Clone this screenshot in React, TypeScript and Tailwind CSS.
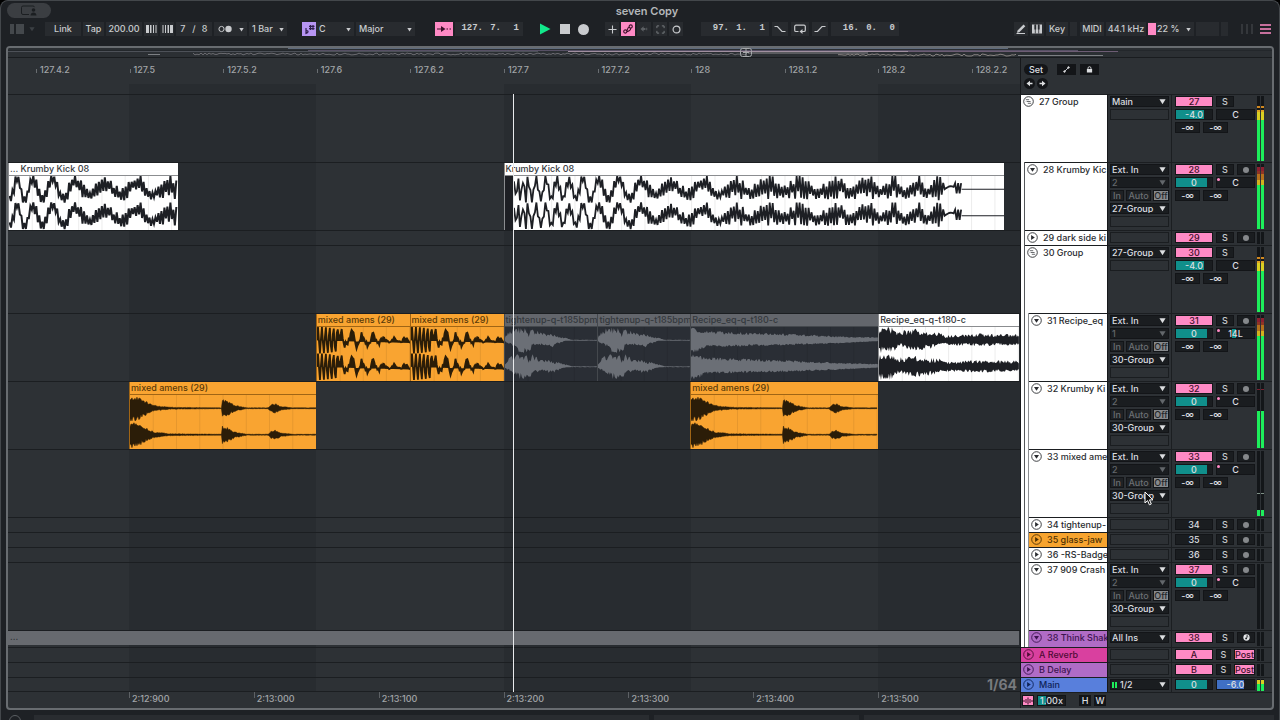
import type { ReactNode } from 'react';
import { clsx } from 'clsx';

type Point = [number, number];
type Wave = 'kick' | 'kickTail' | 'hits' | 'break' | 'tighten' | 'recipe' | 'recipeLoud' | 'none';
type Tone = 'white' | 'orange' | 'muted' | 'ghost';

interface Clip {
  name: string;
  start: number;
  end: number;
  tone: Tone;
  wave: Wave;
}

interface MeterPart {
  size: number;
  color: string;
}

interface Track {
  id: string;
  name: string;
  height: string;
  depth: number;
  icon: 'group' | 'open' | 'closed';
  color: string;
  input?: string;
  channel?: string;
  output?: string;
  active: boolean;
  volume?: string;
  pan?: string;
  arm?: 'audio' | 'midi';
  meter: MeterPart[];
  clips: Clip[];
}

// Width of the visible part of the timeline, in timeline units
const VIEW = 1013;
const pct = (units: number) => `${(units / VIEW) * 100}%`;

const IDLE: MeterPart[] = [];
const LOUD: MeterPart[] = [
  { size: 6, color: 'bg-[#8c1f31]' },
  { size: 6, color: 'bg-[#8f3524]' },
  { size: 8, color: 'bg-[#b5701d]' },
  { size: 8, color: 'bg-[#d3b01e]' },
  { size: 68, color: 'bg-[#1dee5b]' },
];
const GROUPED: MeterPart[] = [
  { size: 3, color: 'bg-[#d0871f]' },
  { size: 2, color: 'bg-[#131619]' },
  { size: 4, color: 'bg-[#dfa221]' },
  { size: 12, color: 'bg-[#d9cf22]' },
  { size: 63, color: 'bg-[#1dee5b]' },
];

const TRACKS: Track[] = [
  {
    id: '27', name: '27 Group', height: 'h-[68px]', depth: 0, icon: 'group', color: 'bg-white text-[#2a2c30]',
    input: 'Main', active: true, volume: '-4.0', pan: 'C', meter: GROUPED, clips: [],
  },
  {
    id: '28', name: '28 Krumby Kic', height: 'h-[68px]', depth: 1, icon: 'open', color: 'bg-white text-[#2a2c30]',
    input: 'Ext. In', channel: '2', output: '27-Group', active: true, volume: '0', pan: 'C', arm: 'audio', meter: LOUD,
    clips: [
      { name: '... Krumby Kick 08', start: 0, end: 170, tone: 'white', wave: 'kickTail' },
      { name: 'Krumby Kick 08', start: 496, end: 997, tone: 'white', wave: 'kick' },
    ],
  },
  {
    id: '29', name: '29 dark side ki', height: 'h-[15px]', depth: 1, icon: 'closed', color: 'bg-white text-[#2a2c30]',
    active: true, arm: 'audio', meter: IDLE, clips: [],
  },
  {
    id: '30', name: '30 Group', height: 'h-[68px]', depth: 1, icon: 'group', color: 'bg-white text-[#2a2c30]',
    input: '27-Group', active: true, volume: '-4.0', pan: 'C', meter: GROUPED, clips: [],
  },
  {
    id: '31', name: '31 Recipe_eq', height: 'h-[68px]', depth: 2, icon: 'open', color: 'bg-white text-[#2a2c30]',
    input: 'Ext. In', channel: '1', output: '30-Group', active: true, volume: '0', pan: '14L', arm: 'audio', meter: LOUD,
    clips: [
      { name: 'mixed amens (29)', start: 308, end: 402, tone: 'orange', wave: 'break' },
      { name: 'mixed amens (29)', start: 402, end: 496, tone: 'orange', wave: 'break' },
      { name: 'tightenup-q-t185bpm', start: 496, end: 590, tone: 'muted', wave: 'tighten' },
      { name: 'tightenup-q-t185bpm', start: 590, end: 683, tone: 'muted', wave: 'tighten' },
      { name: 'Recipe_eq-q-t180-c', start: 683, end: 871, tone: 'muted', wave: 'recipe' },
      { name: 'Recipe_eq-q-t180-c', start: 871, end: 1012, tone: 'white', wave: 'recipeLoud' },
    ],
  },
  {
    id: '32', name: '32 Krumby Ki', height: 'h-[68px]', depth: 2, icon: 'open', color: 'bg-white text-[#2a2c30]',
    input: 'Ext. In', channel: '2', output: '30-Group', active: true, volume: '0', pan: 'C', arm: 'audio',
    meter: [
      { size: 2, color: 'bg-[#7a1f30]' },
      { size: 32, color: 'bg-[#131619]' },
      { size: 57, color: 'bg-[#1dee5b]' },
    ],
    clips: [
      { name: 'mixed amens (29)', start: 121, end: 308, tone: 'orange', wave: 'hits' },
      { name: 'mixed amens (29)', start: 683, end: 871, tone: 'orange', wave: 'hits' },
    ],
  },
  {
    id: '33', name: '33 mixed ame', height: 'h-[68px]', depth: 2, icon: 'open', color: 'bg-white text-[#2a2c30]',
    input: 'Ext. In', channel: '2', output: '30-Group', active: true, volume: '0', pan: 'C', arm: 'audio',
    meter: [
      { size: 2, color: 'bg-[#7f9087]' },
      { size: 24, color: 'bg-[#131619]' },
      { size: 10, color: 'bg-[#1dee5b]' },
    ],
    clips: [],
  },
  {
    id: '34', name: '34 tightenup-', height: 'h-[15px]', depth: 2, icon: 'closed', color: 'bg-white text-[#2a2c30]',
    active: false, arm: 'audio', meter: IDLE, clips: [],
  },
  {
    id: '35', name: '35 glass-jaw', height: 'h-[15px]', depth: 2, icon: 'closed', color: 'bg-[#f7a42f] text-[#4d3104]',
    active: false, arm: 'audio', meter: IDLE, clips: [],
  },
  {
    id: '36', name: '36 -RS-Badge', height: 'h-[15px]', depth: 2, icon: 'closed', color: 'bg-white text-[#2a2c30]',
    active: false, arm: 'audio', meter: IDLE, clips: [],
  },
  {
    id: '37', name: '37 909 Crash', height: 'h-[68px]', depth: 2, icon: 'open', color: 'bg-white text-[#2a2c30]',
    input: 'Ext. In', channel: '2', output: '30-Group', active: true, volume: '0', pan: 'C', arm: 'audio', meter: IDLE, clips: [],
  },
  {
    id: '38', name: '38 Think Shak', height: 'h-[17px]', depth: 2, icon: 'open', color: 'bg-[#b06cc6] text-[#3d1450]',
    input: 'All Ins', active: true, arm: 'midi', meter: IDLE,
    clips: [{ name: '...', start: 0, end: 1012, tone: 'ghost', wave: 'none' }],
  },
];

const RETURNS = [
  { id: 'A', name: 'A Reverb', color: 'bg-[#d9409f] text-[#4f0c36]' },
  { id: 'B', name: 'B Delay', color: 'bg-[#b06cc6] text-[#3d1450]' },
];

const BEATS = ['127.4.2', '127.5', '127.5.2', '127.6', '127.6.2', '127.7', '127.7.2', '128', '128.1.2', '128.2', '128.2.2'];
const TIMES = ['2:12:900', '2:13:000', '2:13:100', '2:13:200', '2:13:300', '2:13:400', '2:13:500'];

/* ---------- waveforms ---------- */

const random = (seed: number) => {
  let s = seed;
  return () => {
    s = (s * 16807) % 2147483647;
    return s / 2147483647;
  };
};

const lerp = (points: Point[], x: number) => {
  const i = points.findIndex((p) => p[0] >= x);
  if (i === -1) return points[points.length - 1][1];
  if (i === 0) return points[0][1];
  const [x0, y0] = points[i - 1];
  const [x1, y1] = points[i];
  return y0 + ((y1 - y0) * (x - x0)) / (x1 - x0);
};

// Filled shape: top and bottom reach are given as envelopes round the centre
const envelope = (width: number, center: number, top: Point[], bottom: Point[], rough: number, seed: number) => {
  const r = random(seed * 7919);
  const up: string[] = [];
  const down: string[] = [];
  for (let x = 0; x <= width; x += 1) {
    up.push(`${x} ${(center - lerp(top, x) * (1 - rough * r())).toFixed(1)}`);
    down.unshift(`${x} ${(center + lerp(bottom, x) * (1 - rough * r())).toFixed(1)}`);
  }
  return `M${up.join('L')}L${down.join('L')}Z`;
};

const KICK_PEAKS = [9, 13, 18, 23, 31, 41, 52, 64, 78, 94, 114, 136, 166, 199, 230, 263, 296, 333, 363, 391, 412, 437];
const KICK_SLOW: Point[] = [[0, 10], [120, 10], [150, 6], [200, 6], [240, 3], [430, 3], [441, 0]];
const KICK_FAST: Point[] = [[0, 6], [60, 6], [120, 7], [200, 8], [230, 13], [437, 13], [444, 3], [450, 1], [458, 0]];

const kick = (from: number, to: number, center: number) => {
  const r = random(421177);
  const out: string[] = [];
  for (let i = 0; i * 1.5 < to; i += 1) {
    const x = i * 1.5;
    const jitter = r();
    if (x < from) continue;
    let y = 0;
    if (x < 441) {
      const n = KICK_PEAKS.findIndex((p) => p > x);
      const a = n > 0 ? KICK_PEAKS[n - 1] : n === 0 ? 5 : 437;
      const b = n >= 0 ? KICK_PEAKS[n] : 460;
      const swell = Math.cos((2 * Math.PI * (x - a)) / (b - a));
      y = swell * lerp(KICK_SLOW, x) + (i % 2 ? 1 : -1) * (0.3 + 0.7 * jitter) * lerp(KICK_FAST, x) * (x > 210 ? 0.75 + 0.25 * swell : 1);
    } else if (x < 458) {
      y = x < 451 ? 3 * Math.sin((x - 441) / 4) : i % 2 ? 6 : -4;
    }
    out.push(`${(x - from).toFixed(1)} ${(center - Math.max(-13, Math.min(13, y))).toFixed(1)}`);
  }
  return `M${out.join('L')}`;
};

const breakLine = (center: number) => {
  const r = random(977311);
  const env: Point[] = [[0, 13], [36, 13], [48, 9], [60, 7], [66, 4], [94, 3]];
  const out: string[] = [];
  for (let x = 0; x <= 94; x += 1) {
    const fast = x < 22 ? Math.sin(x * 1.6) : Math.sin(x * 0.58) * 0.6 + (r() - 0.5) * 0.9;
    out.push(`${x} ${(center - fast * lerp(env, x)).toFixed(1)}`);
  }
  return `M${out.join('L')}`;
};

const HITS: Point[] = [
  [0, 13], [8, 12], [14, 8], [24, 3], [40, 1], [92, 0.5], [93, 9], [99, 7], [106, 3], [118, 0.5],
  [139, 0.5], [142, 4], [146, 5], [152, 2], [164, 0.5], [187, 0.5],
];
const TIGHTEN_TOP: Point[] = [[0, 4], [6, 12], [22, 13], [24, 4], [27, 13], [34, 9], [44, 7], [56, 4], [68, 0.5], [94, 0.5]];
const TIGHTEN_LOW: Point[] = [[0, 2], [8, 6], [14, 12], [24, 13], [28, 6], [38, 5], [48, 7], [60, 1], [68, 0.5], [94, 0.5]];
const RECIPE_TOP: Point[] = [[0, 13], [12, 10], [26, 9], [60, 8], [110, 6], [150, 4], [188, 3]];
const RECIPE_LOW: Point[] = [[0, 13], [8, 12], [14, 7], [60, 6], [100, 5], [150, 3], [188, 1]];
const LOUD_TOP: Point[] = [[0, 13], [14, 13], [20, 9], [36, 12], [44, 8], [60, 9], [66, 5], [100, 7], [141, 6]];
const LOUD_LOW: Point[] = [[0, 13], [14, 13], [20, 6], [36, 11], [60, 7], [66, 5], [100, 6], [141, 5]];

const CENTERS = [13, 39];

function Waveform({ wave, width }: { wave: Wave; width: number }) {
  return (
    <svg viewBox={`0 0 ${width} 53`} preserveAspectRatio="none" className="block h-full w-full" aria-hidden="true">
      {Array.from({ length: Math.floor(width / 23.4) }, (_, i) => (
        <line key={i} x1={(i + 1) * 23.4} x2={(i + 1) * 23.4} y1="0" y2="53" stroke="#000" strokeOpacity="0.08" strokeWidth="1" />
      ))}
      {wave === 'kick' && <rect x="0" y="0" width="9" height="53" fill="#1d1f24" />}
      {CENTERS.map((c, i) => {
        if (wave === 'kick') {
          return (
            <g key={c} fill="none" stroke="#1d1f24">
              <path d={kick(9, 458, c)} transform="translate(9 0)" strokeWidth="1.8" />
              <path d={`M458 ${c}H501`} strokeWidth="1" />
            </g>
          );
        }
        if (wave === 'kickTail') {
          return <path key={c} d={kick(70, 240, c)} fill="none" stroke="#1d1f24" strokeWidth="2" />;
        }
        if (wave === 'break') {
          return <path key={c} d={breakLine(c)} fill="#2b1d08" stroke="#2b1d08" strokeWidth="1.8" />;
        }
        if (wave === 'hits') {
          return <path key={c} d={envelope(187, c, HITS, HITS, 0.4, 31 + i)} fill="#2b1d08" stroke="#2b1d08" strokeWidth="0.5" />;
        }
        if (wave === 'tighten') {
          return <path key={c} d={envelope(94, c, TIGHTEN_TOP, TIGHTEN_LOW, 0.5, 77 + i)} fill="#6b6f76" />;
        }
        if (wave === 'recipe') {
          return <path key={c} d={envelope(188, c, RECIPE_TOP, RECIPE_LOW, 0.35, 55 + i)} fill="#6b6f76" />;
        }
        return <path key={c} d={envelope(141, c, LOUD_TOP, LOUD_LOW, 0.55, 15 + i)} fill="#1d1f24" />;
      })}
    </svg>
  );
}

/* ---------- small controls ---------- */

function Triangle({ className = 'size-[7px]' }: { className?: string }) {
  return (
    <svg viewBox="0 0 8 8" className={className} fill="currentColor" aria-hidden="true">
      <path d="M0.5 1.5h7L4 7z" />
    </svg>
  );
}

function Dropdown({ label, value, dim, lead }: { label: string; value: string; dim?: boolean; lead?: ReactNode }) {
  return (
    <div
      className={clsx(
        'flex h-[11px] items-center border border-[#131518] bg-[#1a1d20] pr-[2px] pl-px',
        dim ? 'text-[#63676b]' : 'text-[#dcdee0]'
      )}
    >
      {lead}
      <select aria-label={label} defaultValue={value} className="h-[9px] min-w-0 flex-1 appearance-none bg-transparent text-[9px] leading-[9px] outline-none">
        <option>{value}</option>
      </select>
      <Triangle />
    </div>
  );
}

function BarField({ label, value, fill, fillColor, className }: { label: string; value: string; fill?: string; fillColor?: string; className: string }) {
  return (
    <div className={clsx('relative h-[11px] border border-[#131518] bg-[#1a1d20]', className)}>
      {fill && <div className={clsx('absolute inset-y-0 left-0', fill, fillColor)} />}
      <input
        aria-label={label}
        defaultValue={value}
        className="relative block h-[9px] w-full bg-transparent text-center text-[9px] leading-[9px] text-[#dcdee0] outline-none"
      />
    </div>
  );
}

function SmallButton({ children, className, label }: { children: ReactNode; className: string; label?: string }) {
  return (
    <button aria-label={label} className={clsx('flex h-[11px] items-center justify-center border border-[#131518] text-[9px] leading-[9px]', className)}>
      {children}
    </button>
  );
}

function Meter({ parts }: { parts: MeterPart[] }) {
  return (
    <div className="flex h-full w-[7px] gap-px pb-px">
      {[0, 1].map((side) => (
        <div key={side} className="flex h-full w-[3px] flex-col justify-end bg-[#131619]">
          {parts.map((part, i) => (
            <div key={i} className={part.color} style={{ height: `${part.size}%` }} />
          ))}
        </div>
      ))}
    </div>
  );
}

function FoldIcon({ kind }: { kind: Track['icon'] }) {
  return (
    <svg viewBox="0 0 11 11" className="size-[11px] shrink-0" fill="none" stroke="currentColor" aria-hidden="true">
      <circle cx="5.5" cy="5.5" r="4.8" strokeWidth="0.9" />
      {kind === 'open' && <path d="M3 4h5L5.5 7.7z" fill="currentColor" stroke="none" />}
      {kind === 'closed' && <path d="M4.1 3v5l3.7-2.5z" fill="currentColor" stroke="none" />}
      {kind === 'group' && <path d="M2.8 3.7h3.4M4 5.5h3.6M4.8 7.3h3.4M2.8 5.5h.6" strokeWidth="0.7" />}
    </svg>
  );
}

function ToolBox({ children, className }: { children?: ReactNode; className?: string }) {
  return <div className={clsx('flex h-[14px] shrink-0 items-center justify-center bg-[#282b2f]', className)}>{children}</div>;
}

function ToolButton({ children, className, label }: { children: ReactNode; className?: string; label?: string }) {
  return (
    <button aria-label={label} className={clsx('flex h-[14px] shrink-0 items-center justify-center', className)}>
      {children}
    </button>
  );
}

function ToolSelect({ label, value, className }: { label: string; value: string; className: string }) {
  return (
    <div className={clsx('flex h-[14px] shrink-0 items-center bg-[#282b2f] pr-[3px] pl-[3px]', className)}>
      <select aria-label={label} defaultValue={value} className="min-w-0 flex-1 appearance-none bg-transparent outline-none">
        <option>{value}</option>
      </select>
      <Triangle className="size-[5px]" />
    </div>
  );
}

function PositionField({ label, values }: { label: string; values: string[] }) {
  return (
    <div className="flex h-[14px] w-[68px] shrink-0 items-center justify-end gap-[2px] bg-[#282b2f] pr-1">
      {values.map((value, i) => (
        <input
          key={i}
          aria-label={`${label} ${i + 1}`}
          defaultValue={i < 2 ? `${value}.` : value}
          className={clsx('bg-transparent text-right font-["Liberation_Mono"] text-[9px] font-bold outline-none', i === 0 ? 'w-[26px]' : 'w-[16px]')}
        />
      ))}
    </div>
  );
}

/* ---------- top bar ---------- */

function TitleBar() {
  return (
    <div className="grid h-[19px] grid-cols-3 items-center px-px">
      <div className="flex h-[15px] w-11 items-center justify-center rounded-full bg-[#3b3e42]">
        <svg viewBox="0 0 18 12" className="h-3 w-[18px]" fill="none" stroke="#1b1e21" aria-hidden="true">
          <path d="M9 9.5H3a1.5 1.5 0 0 1-1.5-1.5V2.5A1.5 1.5 0 0 1 3 1h10a1.5 1.5 0 0 1 1.500 1.200" />
          <circle cx="13.5" cy="5" r="1.8" fill="#1b1e21" stroke="none" />
          <path d="M10.500 10.500c0-4 6-4 6 0z" fill="#1b1e21" stroke="none" />
        </svg>
      </div>
      <h1 className="pl-[14px] text-center text-[11px] leading-4 font-semibold text-[#b4b7ba]">seven Copy</h1>
    </div>
  );
}

function Toolbar() {
  return (
    <div className="flex h-[18px] items-center pr-[3px] pl-1 text-[9px] font-medium text-[#c9cbce]">
      <ToolButton label="Browser" className="w-[14px]">
        <svg viewBox="0 0 14 10" className="h-[10px] w-[14px]" fill="#44484c">
          <path d="M0 0h4v10H0zM6 0h8v10H6z" />
        </svg>
      </ToolButton>
      <span className="ml-[5px] text-[#3c4044]"><Triangle className="size-[6px]" /></span>

      <div className="ml-[10px] flex items-center gap-[2px]">
        <ToolButton className="w-9 bg-[#282b2f]">Link</ToolButton>
        <ToolButton className="w-[21px] bg-[#282b2f]">Tap</ToolButton>
        <ToolBox className="w-9">
          <input aria-label="Tempo" defaultValue="200.00" className="w-full bg-transparent text-center outline-none" />
        </ToolBox>
        <ToolButton label="Nudge down" className="w-[14px] bg-[#282b2f]">
          <svg viewBox="0 0 11 8" className="h-2 w-[11px]" fill="currentColor"><path d="M0 0h3v8H0zM4 0h1.500v8H4zM7 0h1v8H7zM9.500 0h1v8h-1z" /></svg>
        </ToolButton>
        <ToolButton label="Nudge up" className="w-[14px] bg-[#282b2f]">
          <svg viewBox="0 0 11 8" className="h-2 w-[11px]" fill="currentColor"><path d="M0.500 0h1v8h-1zM3 0h1v8H3zM5.500 0H7v8H5.500zM8 0h3v8H8z" /></svg>
        </ToolButton>
        <ToolBox className="w-9 gap-[6px]">
          <input aria-label="Beats per bar" defaultValue="7" className="w-[6px] bg-transparent outline-none" />/
          <input aria-label="Beat unit" defaultValue="8" className="w-[6px] bg-transparent outline-none" />
        </ToolBox>
        <ToolButton label="Metronome" className="w-[33px] gap-[7px] bg-[#282b2f]">
          <svg viewBox="0 0 14 8" className="h-2 w-[14px]"><circle cx="3.5" cy="4" r="2.6" fill="none" stroke="currentColor" /><circle cx="10.5" cy="4" r="3.2" fill="currentColor" /></svg>
          <Triangle className="size-[5px]" />
        </ToolButton>
        <ToolSelect label="Quantization" value="1 Bar" className="w-[38px]" />
      </div>

      <div className="ml-[15px] flex items-center">
        <ToolButton label="Scale mode" className="w-[14px] bg-[#b795f3]">
          <svg viewBox="0 0 14 14" className="size-[14px]" fill="none" stroke="#30204d">
            <path d="M4 6v5.500c3-1 2.500-3.500 0-2.500" strokeWidth="1.200" />
            <path d="M8.500 3v5M11 3v5M7 4.400h5.500M7 6.600h5.500" strokeWidth="1.200" />
          </svg>
        </ToolButton>
        <ToolSelect label="Root note" value="C" className="w-[38px]" />
        <ToolSelect label="Scale" value="Major" className="ml-[2px] w-[59px]" />
      </div>

      <div className="ml-5 flex items-center gap-[2px]">
        <ToolButton label="Follow" className="w-[18px] bg-[#ff8ac5]">
          <svg viewBox="0 0 14 8" className="h-2 w-[14px]" fill="none" stroke="#3d1029"><path d="M0 4h6M9.500 4h1.500M12.500 4H14" strokeWidth="1.200" /><path d="M4 1l4.500 3L4 7z" fill="#3d1029" stroke="none" /></svg>
        </ToolButton>
        <PositionField label="Song position" values={['127', '7', '1']} />
      </div>

      <div className="ml-4 flex items-center gap-2">
        <ToolButton label="Play" className="w-[12px]">
          <svg viewBox="0 0 12 12" className="size-3" fill="#12e88b"><path d="M1 0.500v11L11.500 6z" /></svg>
        </ToolButton>
        <ToolButton label="Stop" className="w-[11px]">
          <span className="size-[10px] bg-[#c9cbce]" />
        </ToolButton>
        <ToolButton label="Record" className="w-[11px]">
          <span className="size-[11px] rounded-full bg-[#c9cbce]" />
        </ToolButton>
      </div>

      <div className="ml-4 flex items-center gap-[2px]">
        <ToolButton label="Overdub" className="w-[14px] bg-[#282b2f]">
          <svg viewBox="0 0 10 10" className="size-[9px]" stroke="currentColor"><path d="M5 0.500v9M0.500 5h9" strokeWidth="1.200" /></svg>
        </ToolButton>
        <ToolButton label="Automation arm" className="w-[14px] bg-[#ff8ac5]">
          <svg viewBox="0 0 10 10" className="size-[10px]" fill="none" stroke="#3d1029" strokeWidth="1.1"><circle cx="2.3" cy="7.500" r="1.6" /><circle cx="7.700" cy="2.500" r="1.6" /><path d="M3.600 6.500C5.500 5.500 3.500 4 6.300 3.300M7.500 4.200c.3 1.500-.6 2.800-3.500 3.400" /></svg>
        </ToolButton>
        <ToolButton label="Re-enable automation" className="w-[14px] bg-[#282b2f] text-[#5b5f63]">
          <svg viewBox="0 0 10 8" className="h-2 w-[9px]" fill="currentColor"><path d="M0.500 4L4 1v2h2v2H4v2zM7 2.500h1v3H7z" /></svg>
        </ToolButton>
        <ToolButton label="Capture" className="w-[14px] bg-[#282b2f] text-[#7d8185]">
          <svg viewBox="0 0 10 10" className="size-[9px]" fill="none" stroke="currentColor"><path d="M1 3.500V1h2.500M6.500 1H9v2.500M9 6.500V9H6.500M3.500 9H1V6.500" /></svg>
        </ToolButton>
        <ToolButton label="Session record" className="w-[14px] bg-[#282b2f]">
          <svg viewBox="0 0 10 10" className="size-[9px]" fill="none" stroke="currentColor"><circle cx="5" cy="5" r="3.8" strokeWidth="1.3" /></svg>
        </ToolButton>
      </div>

      <div className="ml-[18px] flex items-center gap-[3px]">
        <PositionField label="Loop start" values={['97', '1', '1']} />
        <ToolButton label="Punch in" className="w-[16px] bg-[#282b2f]">
          <svg viewBox="0 0 12 8" className="h-2 w-3" fill="none" stroke="currentColor"><path d="M0.500 1.500h3l4.500 5h3.500" strokeWidth="1.200" /></svg>
        </ToolButton>
        <ToolButton label="Loop" className="w-[18px] bg-[#282b2f]">
          <svg viewBox="0 0 12 10" className="h-[10px] w-3" fill="none" stroke="currentColor"><path d="M4.500 7.500H2A1.300 1.300 0 0 1 .7 6.200V2.500A1.300 1.300 0 0 1 2 1.200h8a1.300 1.300 0 0 1 1.300 1.300v3.700A1.300 1.300 0 0 1 10 7.500H8" strokeWidth="1.200" /><path d="M8.500 5v5L5.500 7.500z" fill="currentColor" stroke="none" /></svg>
        </ToolButton>
        <ToolButton label="Punch out" className="w-[16px] bg-[#282b2f]">
          <svg viewBox="0 0 12 8" className="h-2 w-3" fill="none" stroke="currentColor"><path d="M0.500 6.500h3l4.500-5h3.500" strokeWidth="1.200" /></svg>
        </ToolButton>
        <PositionField label="Loop length" values={['16', '0', '0']} />
      </div>

      <div className="flex-1" />

      <div className="flex items-center gap-[2px]">
        <ToolButton label="Draw mode" className="w-[14px] bg-[#282b2f]">
          <svg viewBox="0 0 10 10" className="size-[10px]" fill="currentColor"><path d="M1.500 6.500L7.500 .5l1.800 1.800-6 6-2.300.5zM0.500 9h8.500v1H.5z" /></svg>
        </ToolButton>
        <ToolButton label="Computer keyboard" className="w-[14px] bg-[#282b2f]">
          <svg viewBox="0 0 10 10" className="size-[10px]"><path d="M0 0.500h10v9H0z" fill="currentColor" /><path d="M3.300 0.500v9M6.700 0.500v9" stroke="#282b2f" strokeWidth="0.8" /><path d="M3.300 0.500v5M6.700 0.500v5" stroke="#282b2f" strokeWidth="1.800" /></svg>
        </ToolButton>
        <ToolButton className="w-[22px] bg-[#282b2f]">Key</ToolButton>
        <ToolBox className="w-[7px]" />
        <ToolButton className="ml-px w-[24px] bg-[#282b2f]">MIDI</ToolButton>
        <ToolBox className="w-10">44.1 kHz</ToolBox>
        <ToolBox className="w-[46px] justify-start">
          <span className="h-3 w-2 bg-[#ff8ac5]" />
          <span className="pl-px">22 %</span>
          <span className="ml-auto pr-[3px]"><Triangle className="size-[5px]" /></span>
        </ToolBox>
        <ToolBox className="w-[23px]" />
        <ToolBox className="w-[7px]" />
        <svg viewBox="0 0 12 10" className="ml-[11px] h-[10px] w-3" stroke="#4b4f53"><path d="M1 0v10M6 0v10M11 0v10" /></svg>
        <ToolButton label="Arrangement view" className="ml-[5px] w-[11px]">
          <svg viewBox="0 0 11 10" className="h-[10px] w-[11px]" stroke="#ff8ac5" strokeWidth="1.5"><path d="M0 1h11M0 5h11M0 9h11" /></svg>
        </ToolButton>
      </div>
    </div>
  );
}

/* ---------- arrangement ---------- */

const overviewNoise = (from: number, to: number, y: number, seed: number) => {
  const r = random(seed);
  const out: string[] = [];
  for (let x = from; x < to; x += 2) out.push(`${x} ${(y + (r() - 0.5) * 2).toFixed(1)}`);
  return `M${out.join('L')}`;
};

function Overview() {
  return (
    <div className="h-[10px] border-b border-[#191c1f] bg-[#2b2f33]">
      <svg viewBox="0 0 1264 9" preserveAspectRatio="none" className="block h-[9px] w-full" fill="none" aria-hidden="true">
        <path d="M0 2.500H1264" stroke="#23272b" />
        <path d="M0 3.500H530" stroke="#4d5158" />
        <path d="M280 0.500H1000" stroke="#5f6b7c" />
        <path d="M300 2.500H1070" stroke="#575065" />
        <path d="M560 3.500H900" stroke="#a08f9f" />
        <path d="M900 3.500H1110" stroke="#6d5d74" />
        <path d={overviewNoise(185, 740, 6, 12011)} stroke="#86858a" strokeOpacity="0.7" />
        <path d="M740 5H860" stroke="#8a888c" />
        <path d={overviewNoise(830, 1010, 7, 45077)} stroke="#a09a96" strokeOpacity="0.8" />
        <path d="M140 6.500h12M1010 7.500h85" stroke="#7c7f83" />
        <rect x="732.5" y="0.5" width="11" height="8" rx="2" stroke="#a5a8ab" />
        <path d="M738 1v7M735 4.500h6" stroke="#a5a8ab" />
      </svg>
    </div>
  );
}

const TONES: Record<Tone, { box: string; title: string }> = {
  white: { box: 'bg-white border-[#8b8d90]', title: 'bg-white text-[#33363a] border-[#8b8d90]' },
  orange: { box: 'bg-[#f9a431] border-[#a06515]', title: 'bg-[#f9a431] text-[#5a3a08] border-[#a06515]' },
  muted: { box: 'bg-[#2a2e35] border-[#44484d]', title: 'bg-[#63666c] text-[#34383d] border-[#44484d]' },
  ghost: { box: 'bg-[#676a6f] border-[#676a6f]', title: 'bg-[#676a6f] text-[#2a2d31] border-[#676a6f]' },
};

function Lane({ track }: { track: Track }) {
  return (
    <div className={clsx('flex overflow-hidden border-t border-[#1b1e21]', track.height)}>
      {track.clips.map((clip, i) => (
        <div
          key={i}
          className={clsx('flex shrink-0 flex-col overflow-hidden border-l', TONES[clip.tone].box, clip.tone === 'ghost' && 'mb-[2px]')}
          style={{
            marginLeft: pct(clip.start - (i > 0 ? track.clips[i - 1].end : 0)),
            width: pct(clip.end - clip.start),
          }}
        >
          <div className={clsx('h-[13px] shrink-0 overflow-hidden border-b pl-px text-[9px] leading-3 font-medium whitespace-nowrap', TONES[clip.tone].title)}>
            {clip.name}
          </div>
          {clip.wave !== 'none' && (
            <div className="min-h-0 flex-1">
              <Waveform wave={clip.wave} width={clip.end - clip.start} />
            </div>
          )}
        </div>
      ))}
    </div>
  );
}

function Timeline() {
  return (
    <div className="relative flex min-w-0 flex-1 flex-col overflow-hidden border-r border-[#16181b]">
      {/* Alternating beat shading */}
      <div className="absolute inset-x-0 top-[26px] bottom-[17px] flex overflow-hidden" aria-hidden="true">
        <div className="shrink-0" style={{ width: pct(121) }} />
        {[true, false, true, false, true].map((dark, i) => (
          <div key={i} className={clsx('shrink-0', dark && 'bg-[#282c30]')} style={{ width: pct(187.5) }} />
        ))}
      </div>

      <div className="relative flex h-9 overflow-hidden pt-[6px]">
        <div className="shrink-0" style={{ width: pct(28) }} />
        {BEATS.map((beat) => (
          <div key={beat} className="flex shrink-0 items-start gap-[3px]" style={{ width: pct(93.7) }}>
            <span className="mt-[5px] h-1 w-px bg-[#6a6e72]" />
            <span className="text-[9px] leading-3 font-medium text-[#a2a5a8]">{beat}</span>
          </div>
        ))}
      </div>

      <div className="relative">
        {TRACKS.map((track) => (
          <Lane key={track.id} track={track} />
        ))}
        <div className="h-[15px] border-t border-[#1b1e21]" />
        <div className="h-[15px] border-t border-[#1b1e21]" />
        <div className="h-[15px] border-y border-[#1b1e21] pr-[3px] text-right text-[14px] leading-[13px] font-bold text-[#777a7e]">1/64</div>
        <div className="absolute inset-y-0 w-px bg-[#e8eaec]" style={{ left: pct(505) }} />
      </div>

      <div className="flex h-4 overflow-hidden">
        <div className="shrink-0" style={{ width: pct(121) }} />
        {TIMES.map((time) => (
          <div key={time} className="flex shrink-0 gap-[2px]" style={{ width: pct(125) }}>
            <span className="h-[6px] w-px bg-[#5d6165]" />
            <span className="text-[9px] leading-[14px] font-medium text-[#a2a5a8]">{time}</span>
          </div>
        ))}
      </div>
    </div>
  );
}

/* ---------- track headers ---------- */

function TrackName({ name, icon, color }: { name: string; icon: Track['icon']; color: string }) {
  return (
    <button className={clsx('flex min-w-0 flex-1 items-start gap-[5px] overflow-hidden border-t border-[#1b1e21] pt-px pl-[2px] text-left', color)}>
      <FoldIcon kind={icon} />
      <span className="text-[9px] leading-[11px] font-medium whitespace-nowrap">{name}</span>
    </button>
  );
}

function HeaderRow({ height, depth = 0, name, io, mixer, meter }: { height: string; depth?: number; name: ReactNode; io: ReactNode; mixer: ReactNode; meter: MeterPart[] }) {
  return (
    <div className={clsx('flex', height)}>
      <div className="flex w-[87px] shrink-0 overflow-hidden border-r border-[#16181b]">
        {depth > 0 && <span className="w-1 shrink-0 border-r border-[#54575a] bg-white" />}
        {depth > 1 && <span className="w-1 shrink-0 border-r border-[#8b8d90] bg-white" />}
        {name}
      </div>
      <div className="flex w-[64px] shrink-0 flex-col gap-[2px] border-t border-r border-[#1b1e21] px-[2px] pt-px">{io}</div>
      <div className="flex min-w-0 flex-1 gap-[2px] border-t border-[#1b1e21] pt-px pl-[3px]">
        <div className="flex w-[80px] shrink-0 flex-col gap-[2px]">{mixer}</div>
        <Meter parts={meter} />
      </div>
    </div>
  );
}

const EmptySlot = () => <div className="h-[11px] border border-[#1a1d20]" />;

function TrackHeader({ track }: { track: Track }) {
  const { id } = track;
  return (
    <HeaderRow
      height={track.height}
      depth={track.depth}
      meter={track.meter}
      name={<TrackName name={track.name} icon={track.icon} color={track.color} />}
      io={
        <>
          {track.input ? <Dropdown label={`Track ${id} input`} value={track.input} /> : <EmptySlot />}
          {track.channel && (
            <>
              <Dropdown label={`Track ${id} channel`} value={track.channel} dim />
              <div className="flex justify-between">
                <SmallButton className="w-[14px] bg-[#1f2225] text-[#6b6f73]">In</SmallButton>
                <SmallButton className="w-[25px] bg-[#1f2225] text-[#6b6f73]">Auto</SmallButton>
                <SmallButton className="w-[16px] bg-[#86898c] text-[#24272a]">Off</SmallButton>
              </div>
              <Dropdown label={`Track ${id} output`} value={track.output ?? ''} />
            </>
          )}
          {track.volume && <EmptySlot />}
        </>
      }
      mixer={
        <>
          <div className="flex gap-[3px]">
            <SmallButton className={clsx('w-[38px]', track.active ? 'bg-[#ff8ac5] text-[#3d1029]' : 'bg-[#1a1d20] text-[#dcdee0]')}>{id}</SmallButton>
            <SmallButton label={`Solo ${id}`} className="w-[18px] bg-[#1a1d20] text-[#c9cbce]">S</SmallButton>
            {track.arm && (
              <SmallButton label={`Arm ${id}`} className="w-[18px] bg-[#1a1d20]">
                {track.arm === 'audio' ? (
                  <span className="size-[6px] rounded-full bg-[#85888b]" />
                ) : (
                  <svg viewBox="0 0 8 8" className="size-[7px]"><circle cx="4" cy="4" r="3.6" fill="#e4e6e8" /><path d="M4.500 1.500v3M4.500 1.800L6 3" stroke="#1a1d20" strokeWidth="0.9" fill="none" /><circle cx="3.600" cy="5" r="1.1" fill="#1a1d20" /></svg>
                )}
              </SmallButton>
            )}
          </div>
          {track.volume && (
            <>
              <div className="flex gap-[3px]">
                <BarField label={`Volume ${id}`} value={track.volume} fill={track.volume === '0' ? 'w-[31px]' : 'w-[28px]'} fillColor="bg-[#108f8b]" className="w-[38px]" />
                <div className="relative">
                  <BarField label={`Pan ${id}`} value={track.pan ?? ''} fill={track.pan === '14L' ? 'w-[4px] ml-[15px]' : undefined} fillColor="bg-[#108f8b]" className="w-[39px]" />
                  {track.arm && <span className="absolute top-px left-px size-[3px] rounded-full bg-[#ff8ac5]" />}
                </div>
              </div>
              <div className="flex gap-[3px]">
                <BarField label={`Send A ${id}`} value="-∞" className="w-[25px]" />
                <BarField label={`Send B ${id}`} value="-∞" className="w-[25px]" />
              </div>
            </>
          )}
        </>
      }
    />
  );
}

function Headers() {
  return (
    <div className="relative w-[251px] shrink-0">
      <div className="flex h-9 flex-col gap-[3px] pt-[6px] pl-[3px]">
        <div className="flex h-[11px] items-center">
          <button className="h-[11px] w-6 rounded-full bg-[#131518] text-[9px] leading-[11px] text-[#dcdee0]">Set</button>
          <button aria-label="Automation mode" className="ml-[9px] flex h-[11px] w-[19px] items-center justify-center bg-[#131518]">
            <svg viewBox="0 0 8 8" className="size-[7px]" fill="#dcdee0" stroke="#dcdee0"><path d="M1.500 6.500l5-5" /><circle cx="1.7" cy="6.3" r="0.9" /><circle cx="6.3" cy="1.7" r="0.9" /></svg>
          </button>
          <button aria-label="Lock envelopes" className="ml-[4px] flex h-[11px] w-[19px] items-center justify-center bg-[#131518]">
            <svg viewBox="0 0 8 8" className="size-[7px]" fill="#dcdee0"><path d="M1 3.500h6V7.500H1z" /><path d="M2.300 4V2.500a1.700 1.700 0 0 1 3.400 0V4" fill="none" stroke="#dcdee0" /></svg>
          </button>
        </div>
        <div className="flex gap-[2px]">
          <button aria-label="Previous locator" className="size-[11px] rounded-full bg-[#131518]">
            <svg viewBox="0 0 11 11" className="size-[11px]"><path d="M2.500 5.500L6 2.800v2h2.500v1.400H6v2z" fill="#dcdee0" /></svg>
          </button>
          <button aria-label="Next locator" className="size-[11px] rounded-full bg-[#131518]">
            <svg viewBox="0 0 11 11" className="size-[11px]"><path d="M8.500 5.500L5 2.800v2H2.500v1.400H5v2z" fill="#dcdee0" /></svg>
          </button>
        </div>
      </div>

      {TRACKS.map((track) => (
        <TrackHeader key={track.id} track={track} />
      ))}

      {RETURNS.map((item) => (
        <HeaderRow
          key={item.id}
          height="h-[15px]"
          meter={IDLE}
          name={<TrackName name={item.name} icon="closed" color={item.color} />}
          io={<EmptySlot />}
          mixer={
            <div className="flex gap-[3px]">
              <SmallButton className="w-[38px] bg-[#ff8ac5] text-[#3d1029]">{item.id}</SmallButton>
              <SmallButton label={`Solo ${item.id}`} className="w-[15px] bg-[#1a1d20] text-[#c9cbce]">S</SmallButton>
              <SmallButton className="w-[21px] bg-[#ff8ac5] text-[#3d1029]">Post</SmallButton>
            </div>
          }
        />
      ))}
      <HeaderRow
        height="h-[15px]"
        meter={[{ size: 30, color: 'bg-[#d9cf22]' }, { size: 60, color: 'bg-[#1dee5b]' }]}
        name={<TrackName name="Main" icon="closed" color="bg-[#587fdc] text-[#0f2458]" />}
        io={
          <Dropdown
            label="Main output"
            value="1/2"
            lead={
              <span className="mr-[3px] flex gap-px">
                <span className="h-[6px] w-[2px] bg-[#1dee5b]" />
                <span className="h-[6px] w-[2px] bg-[#1dee5b]" />
              </span>
            }
          />
        }
        mixer={
          <div className="flex gap-[3px]">
            <BarField label="Main volume" value="0" fill="w-[31px]" fillColor="bg-[#108f8b]" className="w-[38px]" />
            <BarField label="Cue volume" value="-6.0" fill="w-[27px]" fillColor="bg-[#3f6fc4]" className="w-[39px]" />
          </div>
        }
      />

      <div className="flex h-4 items-center border-t border-[#1b1e21] pl-px">
        <SmallButton label="Show waveforms" className="w-3 bg-[#ff8ac5]">
          <svg viewBox="0 0 10 8" className="h-[8px] w-[10px]" stroke="#3d1029"><path d="M1 3v2M3 2v4M5 0.500v7M7 2v4M9 3v2" /></svg>
        </SmallButton>
        <div className="ml-[3px]">
          <BarField label="Playback rate" value="1.00x" fill="w-[8px]" fillColor="bg-[#108f8b]" className="w-[29px]" />
        </div>
        <SmallButton className="ml-[13px] w-3 bg-[#131518] text-[#dcdee0]">H</SmallButton>
        <SmallButton className="ml-[3px] w-3 bg-[#131518] text-[#dcdee0]">W</SmallButton>
      </div>

      {/* Mouse pointer */}
      <svg viewBox="0 0 10 15" className="pointer-events-none absolute top-[433px] left-[123px] h-[15px] w-[10px]" aria-hidden="true">
        <path d="M1 1v11l2.600-2.400 1.800 4.200 1.900-.8-1.800-4.100H9z" fill="#111" stroke="#fff" />
      </svg>
    </div>
  );
}

export default function App() {
  return (
    <div className='flex min-h-screen flex-col overflow-hidden bg-black font-["Inter",sans-serif] font-medium'>
      <div className="flex flex-1 flex-col rounded-t-lg border border-b-0 border-[#43474b] bg-[#1e2125] px-[5px]">
        <TitleBar />
        <Toolbar />
        <main className="mt-2 overflow-hidden rounded-[4px] border-2 border-[#686c70] bg-[#2d3135]">
          <Overview />
          <div className="flex">
            <Timeline />
            <Headers />
          </div>
        </main>
        <div className="mt-[5px] flex flex-1 gap-[5px] overflow-hidden pl-[3px]">
          <div className="size-3 rounded-full border border-[#5a5e62]" />
          <div className="ml-2 flex-[3] bg-[#292c30]" />
          <div className="flex-1 bg-[#292c30]" />
          <div className="flex-[2] bg-[#292c30]" />
        </div>
      </div>
    </div>
  );
}
